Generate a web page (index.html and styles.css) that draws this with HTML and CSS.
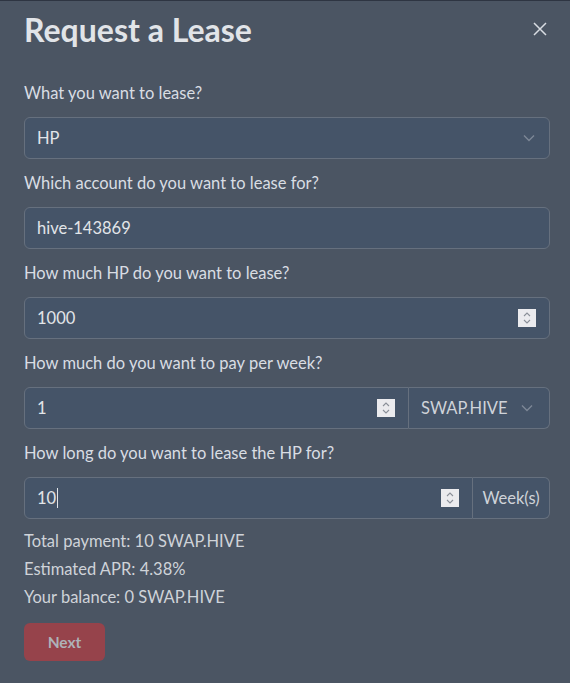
FILE: index.html
```html
<!DOCTYPE html>
<html>
<head>
    <title>Request a Lease</title>
    <link rel="stylesheet" href="styles.css">
</head>
<body>
    <div class="modal">
        <div class="modal-header">
            <h1>Request a Lease</h1>
            <button class="close-btn" aria-label="Close">
                <svg width="14" height="14" viewBox="0 0 14 14"><path d="M1 1L13 13M13 1L1 13" stroke="#d8dce2" stroke-width="1.5" fill="none"/></svg>
            </button>
        </div>

        <label class="field-label">What you want to lease?</label>
        <div class="control select">
            <span>HP</span>
            <svg class="chevron" width="12" height="8" viewBox="0 0 12 8"><path d="M1 1.5L6 6.5L11 1.5" stroke="#7d8796" stroke-width="1.4" fill="none"/></svg>
        </div>

        <label class="field-label">Which account do you want to lease for?</label>
        <div class="control">
            <span>hive-143869</span>
        </div>

        <label class="field-label">How much HP do you want to lease?</label>
        <div class="control">
            <span>1000</span>
            <span class="spinner"><svg width="8" height="14" viewBox="0 0 8 14"><path d="M1 5L4 2L7 5M1 9L4 12L7 9" stroke="#8a8f98" stroke-width="1.1" fill="none"/></svg></span>
        </div>

        <label class="field-label">How much do you want to pay per week?</label>
        <div class="group">
            <div class="control grow">
                <span>1</span>
                <span class="spinner"><svg width="8" height="14" viewBox="0 0 8 14"><path d="M1 5L4 2L7 5M1 9L4 12L7 9" stroke="#8a8f98" stroke-width="1.1" fill="none"/></svg></span>
            </div>
            <div class="control addon select-addon">
                <span>SWAP.HIVE</span>
                <svg class="chevron" width="12" height="8" viewBox="0 0 12 8"><path d="M1 1.5L6 6.5L11 1.5" stroke="#7d8796" stroke-width="1.4" fill="none"/></svg>
            </div>
        </div>

        <label class="field-label">How long do you want to lease the HP for?</label>
        <div class="group last">
            <div class="control grow">
                <span>10<span class="caret"></span></span>
                <span class="spinner"><svg width="8" height="14" viewBox="0 0 8 14"><path d="M1 5L4 2L7 5M1 9L4 12L7 9" stroke="#8a8f98" stroke-width="1.1" fill="none"/></svg></span>
            </div>
            <div class="control addon text-addon">
                <span>Week(s)</span>
            </div>
        </div>

        <div class="summary">
            <p>Total payment: 10 SWAP.HIVE</p>
            <p>Estimated APR: 4.38%</p>
            <p>Your balance: 0 SWAP.HIVE</p>
        </div>

        <button class="next-btn" disabled>Next</button>
    </div>
</body>
</html>
```

FILE: styles.css
```css
body {
    margin: 0;
    background-color: #4b5563;
    font-family: Lato, "Noto Sans", sans-serif;
    color: #d9dde3;
}
.modal {
    min-height: 683px;
    box-sizing: border-box;
    border-top: 1px solid #2e3542;
    padding: 0 20px 0 24px;
    display: flex;
    flex-direction: column;
}
.modal-header {
    display: flex;
    align-items: center;
    justify-content: space-between;
    height: 56px;
    margin-bottom: 24px;
}
.modal-header h1 {
    margin: 0;
    font-size: 32px;
    font-weight: 700;
    color: #e1e4e8;
}
.close-btn {
    background: none;
    border: none;
    padding: 0;
    margin-right: 3px;
    display: flex;
    cursor: pointer;
}
.field-label {
    display: block;
    font-size: 16.5px;
    line-height: 24px;
    margin-bottom: 12px;
}
.control {
    display: flex;
    align-items: center;
    justify-content: space-between;
    height: 42px;
    box-sizing: border-box;
    padding: 0 12px;
    background-color: #455468;
    border: 1px solid #66707e;
    border-radius: 6px;
    font-size: 16.5px;
    color: #e2e5e9;
    margin-bottom: 12px;
}
.chevron {
    margin-right: 2px;
}
.spinner {
    display: flex;
    align-items: center;
    justify-content: center;
    width: 18px;
    height: 18px;
    background-color: #ebebee;
    margin-right: 1px;
}
.group {
    display: flex;
    margin-bottom: 12px;
}
.group.last {
    margin-bottom: 8px;
}
.group .control {
    margin-bottom: 0;
}
.grow {
    flex: 1;
    border-radius: 6px 0 0 6px;
}
.addon {
    border-left: none;
    border-radius: 0 6px 6px 0;
    color: #cfd3d9;
}
.select-addon {
    width: 141px;
    padding: 0 14px 0 12px;
}
.text-addon {
    width: 77px;
    padding: 0 8px;
    justify-content: center;
}
.caret {
    display: inline-block;
    width: 1px;
    height: 20px;
    background-color: #e2e5e9;
    vertical-align: -4px;
    margin-left: 1px;
}
.summary p {
    margin: 0;
    font-size: 16.5px;
    line-height: 28px;
    color: #cfd3d9;
}
.summary {
    margin-bottom: 12px;
}
.next-btn {
    align-self: flex-start;
    width: 81px;
    height: 38px;
    border: none;
    border-radius: 6px;
    background-color: #96434b;
    color: #aeb2b8;
    font-family: inherit;
    font-size: 15.5px;
    font-weight: 700;
}
```
